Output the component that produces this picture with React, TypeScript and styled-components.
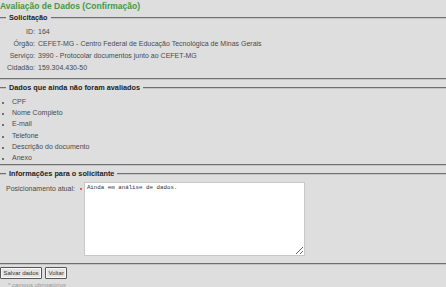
import React from "react";
import styled, { createGlobalStyle } from "styled-components";

const GlobalStyle = createGlobalStyle`
  html, body {
    margin: 0;
    padding: 0;
    background: #dedede;
    overflow: hidden;
  }
  body {
    font-family: "Liberation Sans", Arial, sans-serif;
    font-size: 7px;
    color: #4a4a4a;
  }
`;

const Page = styled.main`
  width: 446px;
  height: 287px;
  overflow: hidden;
`;

const Title = styled.h1`
  margin: 0;
  padding: 1px 0 0 0;
  height: 13px;
  font-size: 8.5px;
  line-height: 11px;
  font-weight: bold;
  color: #3f9b3f;
`;

const Fieldset = styled.fieldset<{ $bottom?: number }>`
  margin: 0 0 4px -12px;
  width: 480px;
  padding: 2px 0 ${(p) => p.$bottom ?? 4}px 18px;
  border: 2px groove #c4c4c4;
  border-left: none;
  border-right: none;
  box-sizing: border-box;
`;

const Legend = styled.legend`
  margin-left: 0;
  padding: 0 3px;
  font-size: 7.3px;
  line-height: 8px;
  font-weight: bold;
  color: #222;
`;

const InfoGrid = styled.dl`
  display: grid;
  grid-template-columns: 29px auto;
  column-gap: 3px;
  margin: 2px 0 0 0;
  line-height: 12px;
  dt {
    text-align: right;
    white-space: nowrap;
  }
  dd {
    margin: 0;
    white-space: nowrap;
  }
`;

const Pending = styled.ul`
  margin: 2px 0 0 -4px;
  padding: 0 0 0 10px;
  line-height: 11.2px;
  list-style: disc;
  li::marker {
    font-size: 6px;
  }
`;

const FieldRow = styled.div`
  display: flex;
  align-items: flex-start;
  padding-top: 2px;
`;

const FieldLabel = styled.label`
  margin-top: 3px;
  white-space: nowrap;
`;

const Required = styled.span`
  width: 2px;
  height: 2px;
  margin: 6px 4px 0 5px;
  background: #e53030;
  border-radius: 1px;
  flex: none;
`;

const TextArea = styled.textarea`
  width: 221px;
  height: 74px;
  box-sizing: border-box;
  margin: 0 0 0 -2px;
  padding: 1px 2px;
  border: 1px solid #c8c8c8;
  background: #fff;
  font-family: "Liberation Mono", "DejaVu Sans Mono", monospace;
  font-size: 5.8px;
  color: #333;
`;

const Actions = styled.div`
  display: flex;
  gap: 3px;
  margin-top: -2px;
`;

const Button = styled.button`
  font-family: "Liberation Sans", Arial, sans-serif;
  font-size: 6px;
  color: #333;
  height: 12px;
  padding: 0 2.5px;
  background: #e4e4e4;
  border: 1px solid #555;
  box-shadow: inset 0 0 0 1px #fafafa;
  border-radius: 1px;
`;

const Footnote = styled.div`
  margin: 3px 0 0 8px;
  color: #9a9a9a;
  font-size: 6px;
  line-height: 7px;
`;

const info = [
  ["ID:", "164"],
  ["Órgão:", "CEFET-MG - Centro Federal de Educação Tecnológica de Minas Gerais"],
  ["Serviço:", "3990 - Protocolar documentos junto ao CEFET-MG"],
  ["Cidadão:", "159.304.430-50"],
];

const pending = ["CPF", "Nome Completo", "E-mail", "Telefone", "Descrição do documento", "Anexo"];

export default function App() {
  return (
    <>
      <GlobalStyle />
      <Page>
        <Title>Avaliação de Dados (Confirmação)</Title>
        <Fieldset>
          <Legend>Solicitação</Legend>
          <InfoGrid>
            {info.map(([k, v]) => (
              <React.Fragment key={k}>
                <dt>{k}</dt>
                <dd>{v}</dd>
              </React.Fragment>
            ))}
          </InfoGrid>
        </Fieldset>
        <Fieldset $bottom={1}>
          <Legend>Dados que ainda não foram avaliados</Legend>
          <Pending>
            {pending.map((p) => (
              <li key={p}>{p}</li>
            ))}
          </Pending>
        </Fieldset>
        <Fieldset $bottom={7}>
          <Legend>Informações para o solicitante</Legend>
          <FieldRow>
            <FieldLabel htmlFor="pos">Posicionamento atual:</FieldLabel>
            <Required />
            <TextArea id="pos" defaultValue="Ainda em análise de dados." />
          </FieldRow>
        </Fieldset>
        <Actions>
          <Button>Salvar dados</Button>
          <Button>Voltar</Button>
        </Actions>
        <Footnote>* campos obrigatórios</Footnote>
      </Page>
    </>
  );
}
